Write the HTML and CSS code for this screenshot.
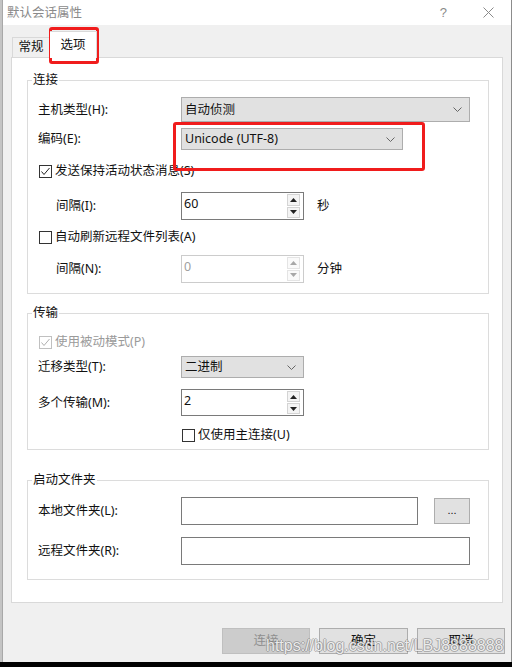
FILE: index.html
```html
<!DOCTYPE html>
<html lang="zh-CN">
<head>
<meta charset="utf-8">
<title>默认会话属性</title>
<link rel="stylesheet" href="styles.css">
</head>
<body>
<div class="screen">
  <div class="strip"></div>
  <div class="dialog">
    <div class="titlebar">
      <span class="title">默认会话属性</span>
      <span class="help">?</span>
      <svg class="close" width="11" height="11" viewBox="0 0 11 11"><path d="M0.5 0.5L10.5 10.5M10.5 0.5L0.5 10.5" stroke="#8a8a8a" stroke-width="1" fill="none"/></svg>
    </div>
    <div class="main">
      <div class="tabs">
        <div class="tab">常规</div>
        <div class="tab active">选项</div>
      </div>
      <div class="panel">
        <div class="group g1">
          <div class="gtitle">连接</div>
          <div class="row r-host">
            <span class="lbl">主机类型(H):</span>
            <div class="select w-wide h24"><span>自动侦测</span><svg class="chev" width="9" height="5" viewBox="0 0 9 5"><path d="M0.5 0.5L4.5 4.5L8.5 0.5" stroke="#666" fill="none"/></svg></div>
          </div>
          <div class="row r-enc">
            <span class="lbl">编码(E):</span>
            <div class="select w-enc h22"><span>Unicode (UTF-8)</span><svg class="chev" width="9" height="5" viewBox="0 0 9 5"><path d="M0.5 0.5L4.5 4.5L8.5 0.5" stroke="#666" fill="none"/></svg></div>
          </div>
          <div class="row r-chk1">
            <span class="cb"><svg width="11" height="11" viewBox="0 0 11 11"><path d="M1.5 5.5L4 8.5L9.5 2" stroke="#222" fill="none"/></svg></span>
            <span class="cbtext">发送保持活动状态消息(S)</span>
          </div>
          <div class="row r-spin1">
            <span class="lbl ind">间隔(I):</span>
            <div class="spin">
              <span class="spin-val">60</span>
              <div class="spin-btns">
                <span class="sbtn"><svg width="7" height="4" viewBox="0 0 7 4"><path d="M0 4L3.5 0L7 4Z" fill="#222"/></svg></span>
                <span class="sbtn"><svg width="7" height="4" viewBox="0 0 7 4"><path d="M0 0L3.5 4L7 0Z" fill="#222"/></svg></span>
              </div>
            </div>
            <span class="unit">秒</span>
          </div>
          <div class="row r-chk2">
            <span class="cb"></span>
            <span class="cbtext">自动刷新远程文件列表(A)</span>
          </div>
          <div class="row r-spin2">
            <span class="lbl ind">间隔(N):</span>
            <div class="spin disabled">
              <span class="spin-val">0</span>
              <div class="spin-btns">
                <span class="sbtn"><svg width="7" height="4" viewBox="0 0 7 4"><path d="M0 4L3.5 0L7 4Z" fill="#a8a8a8"/></svg></span>
                <span class="sbtn"><svg width="7" height="4" viewBox="0 0 7 4"><path d="M0 0L3.5 4L7 0Z" fill="#a8a8a8"/></svg></span>
              </div>
            </div>
            <span class="unit">分钟</span>
          </div>
        </div>

        <div class="group g2">
          <div class="gtitle">传输</div>
          <div class="row r-chk3">
            <span class="cb disabled"><svg width="11" height="11" viewBox="0 0 11 11"><path d="M1.5 5.5L4 8.5L9.5 2" stroke="#b0b0b0" fill="none"/></svg></span>
            <span class="cbtext gray">使用被动模式(P)</span>
          </div>
          <div class="row r-mode">
            <span class="lbl">迁移类型(T):</span>
            <div class="select w-small h22"><span>二进制</span><svg class="chev" width="9" height="5" viewBox="0 0 9 5"><path d="M0.5 0.5L4.5 4.5L8.5 0.5" stroke="#666" fill="none"/></svg></div>
          </div>
          <div class="row r-multi">
            <span class="lbl">多个传输(M):</span>
            <div class="spin h27">
              <span class="spin-val">2</span>
              <div class="spin-btns">
                <span class="sbtn"><svg width="7" height="4" viewBox="0 0 7 4"><path d="M0 4L3.5 0L7 4Z" fill="#222"/></svg></span>
                <span class="sbtn"><svg width="7" height="4" viewBox="0 0 7 4"><path d="M0 0L3.5 4L7 0Z" fill="#222"/></svg></span>
              </div>
            </div>
          </div>
          <div class="row r-chk4">
            <span class="cb off"></span>
            <span class="cbtext">仅使用主连接(U)</span>
          </div>
        </div>

        <div class="group g3">
          <div class="gtitle">启动文件夹</div>
          <div class="row r-local">
            <span class="lbl">本地文件夹(L):</span>
            <div class="field w-local"></div>
            <div class="browse">...</div>
          </div>
          <div class="row r-remote">
            <span class="lbl">远程文件夹(R):</span>
            <div class="field w-wide"></div>
          </div>
        </div>
      </div>
      <div class="buttons">
        <div class="btn disabled">连接</div>
        <div class="btn w89">确定</div>
        <div class="btn">取消</div>
      </div>
    </div>
  </div>
  <div class="mark mark-tab"></div>
  <div class="mark mark-enc"></div>
  <div class="watermark">https://blog.csdn.net/LBJ8888888</div>
</div>
<div class="taskbar"></div>
</body>
</html>
```
FILE: styles.css
```css
* { box-sizing: border-box; }
html, body { margin: 0; padding: 0; }
body {
  width: 512px;
  height: 667px;
  overflow: hidden;
  background: #000;
  font-family: "Noto Sans", "Noto Sans CJK SC", sans-serif;
  font-size: 12.5px;
  line-height: 16px;
  color: #111;
}
.screen { position: relative; display: flex; height: 662px; }
.strip { width: 2px; background: #c4c4c4; }
.dialog {
  flex: 1;
  display: flex;
  flex-direction: column;
  background: #f0f0f0;
  border-left: 1px solid #a8a8a8;
  border-right: 1px solid #8c8c8c;
}
.titlebar {
  height: 25px;
  flex: none;
  background: #fff;
  display: flex;
  align-items: center;
  padding: 0 17px 0 4px;
  color: #8a8a8a;
}
.title { font-size: 12.5px; }
.help { margin-left: auto; font-size: 13px; color: #8a8a8a; margin-right: 36px; font-family: "Liberation Sans", sans-serif; }
.close { display: block; }
.main { flex: 1; display: flex; flex-direction: column; padding: 0 6px 0 8px; }
.tabs { height: 32px; flex: none; display: flex; align-items: flex-end; padding-left: 1px; }
.tab {
  width: 38px;
  height: 20px;
  border: 1px solid #d9d9d9;
  border-bottom: none;
  background: #f0f0f0;
  text-align: center;
  line-height: 18px;
}
.tab.active {
  width: 47px;
  height: 27px;
  background: #fff;
  margin-bottom: -1px;
  position: relative;
  z-index: 1;
  line-height: 26px;
  border-left: none;
}
.panel {
  height: 546px;
  flex: none;
  margin-right: 2px;
  border: 1px solid #d9d9d9;
  background: #fff;
  padding: 0 13px 0 15px;
}
.group { border: 1px solid #dcdcdc; padding-left: 10px; }
.g1 { margin-top: 22px; padding-bottom: 10px; }
.g2 { margin-top: 19px; padding-bottom: 7px; }
.g3 { margin-top: 30px; padding-bottom: 14px; }
.gtitle {
  width: max-content;
  height: 16px;
  margin: -9px 0 0 -6px;
  padding: 0 1px;
  background: #fff;
  line-height: 16px;
}
.row { display: flex; align-items: center; }
.lbl { width: 143px; flex: none; }
.lbl.ind { padding-left: 18px; }
.r-host { margin-top: 9px; }
.r-enc { margin-top: 6px; }
.r-chk1 { margin-top: 14px; height: 14px; }
.r-spin1 { margin-top: 14px; }
.r-chk2 { margin-top: 10px; height: 14px; }
.r-spin2 { margin-top: 11px; }
.r-chk3 { margin-top: 14px; height: 14px; }
.r-mode { margin-top: 7px; }
.r-multi { margin-top: 11px; }
.r-chk4 { margin-top: 12px; height: 14px; padding-left: 143px; }
.r-local { margin-top: 9px; }
.r-remote { margin-top: 12px; }

.select {
  display: flex;
  align-items: center;
  justify-content: space-between;
  background: #e1e1e1;
  border: 1px solid #adadad;
  padding: 0 7px 0 3px;
}
.h24 { height: 25px; }
.h22 { height: 22px; }
.w-wide { width: 289px; }
.w-enc { width: 222px; }
.w-small { width: 123px; }
.chev { display: block; }

.cb {
  width: 13px;
  height: 13px;
  flex: none;
  margin-left: 1px;
  border: 1px solid #333;
  background: #fff;
  display: flex;
  align-items: center;
  justify-content: center;
}
.cb.disabled { border-color: #c0c0c0; }
.cb.off { margin-left: 1px; }
.cb svg { display: block; }
.cbtext { margin-left: 3px; }
.gray { color: #9a9a9a; }

.spin {
  width: 123px;
  height: 28px;
  display: flex;
  border: 1px solid #7a7a7a;
  background: #fff;
  padding: 1px 3px 1px 0;
}
.spin.h27 { height: 27px; }
.spin.disabled { border-color: #cccccc; color: #a0a0a0; }
.spin-val { flex: 1; padding: 2px 0 0 2px; }
.spin-btns { width: 13px; display: flex; flex-direction: column; gap: 1px; }
.sbtn {
  flex: 1;
  border: 1px solid #d4d4d4;
  background: #f4f4f4;
  display: flex;
  align-items: center;
  justify-content: center;
}
.sbtn svg { display: block; }
.spin.disabled .sbtn { border-color: #e4e4e4; background: #fafafa; }
.unit { margin-left: 13px; }

.field { height: 28px; border: 1px solid #7a7a7a; background: #fff; }
.w-local { width: 237px; }
.browse {
  width: 36px;
  height: 26px;
  margin-left: 16px;
  background: #e1e1e1;
  border: 1px solid #adadad;
  text-align: center;
  line-height: 22px;
  font-family: "Liberation Sans", sans-serif;
  font-size: 11px;
}

.buttons { display: flex; justify-content: flex-end; gap: 9px; padding-top: 25px; }
.btn {
  width: 88px;
  height: 26px;
  background: #e1e1e1;
  border: 1px solid #adadad;
  text-align: center;
  line-height: 24px;
}
.btn.w89 { width: 89px; }
.btn.disabled { background: #cccccc; border-color: #bfbfbf; color: #8f8f8f; }

.mark { position: absolute; border: 3px solid #f01c1c; border-radius: 3px; }
.mark-tab { left: 49px; top: 27px; width: 50px; height: 37px; }
.mark-enc { left: 173px; top: 122px; width: 252px; height: 49px; }
.watermark {
  position: absolute;
  left: 266px;
  top: 636px;
  font-family: "Liberation Sans", sans-serif;
  font-size: 16px;
  line-height: 19px;
  color: rgba(255, 255, 255, 0.85);
  text-shadow: 1px 0 0 rgba(110, 110, 110, 0.45), -1px 0 0 rgba(110, 110, 110, 0.45), 0 1px 0 rgba(110, 110, 110, 0.45), 0 -1px 0 rgba(110, 110, 110, 0.45);
}
.taskbar { height: 5px; background: #000; }
```
